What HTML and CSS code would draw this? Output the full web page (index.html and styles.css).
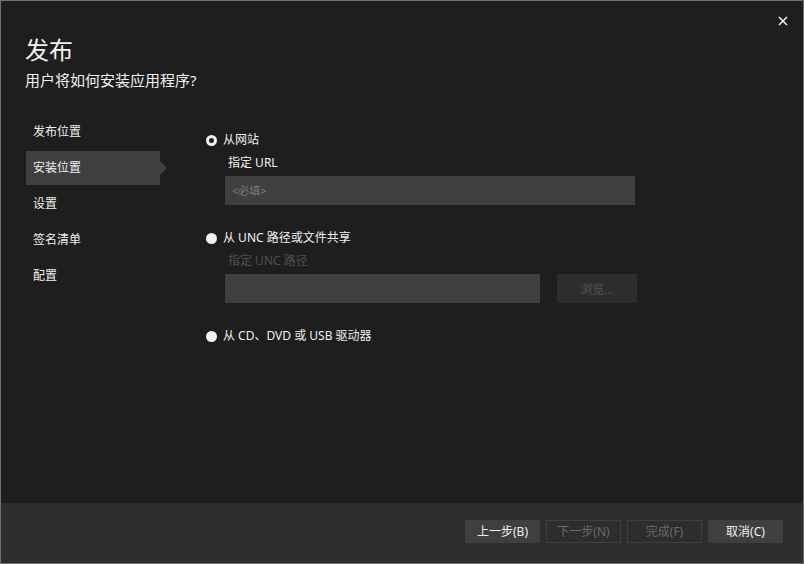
FILE: index.html
```html
<!DOCTYPE html>
<html lang="zh-CN">
  <head>
    <meta charset="UTF-8" />
    <title>发布</title>
    <link rel="stylesheet" href="styles.css">
  </head>
  <body>
    <div id="dialog">
      <button id="close" title="关闭">
        <svg width="10" height="10" viewBox="0 0 10 10">
          <path d="M1 1 L9 9 M9 1 L1 9" stroke="#f1f1f1" stroke-width="1.6" />
        </svg>
      </button>

      <div id="header">
        <h1>发布</h1>
        <div class="subtitle">用户将如何安装应用程序?</div>
      </div>

      <div id="main">
        <ul id="nav">
          <li>发布位置</li>
          <li class="active">安装位置</li>
          <li>设置</li>
          <li>签名清单</li>
          <li>配置</li>
        </ul>

        <div id="content">
          <label class="radio"><span class="dot checked"></span>从网站</label>
          <div class="field">
            <div class="caption">指定 URL</div>
            <div class="input url"><span class="placeholder">&lt;必填&gt;</span></div>
          </div>

          <label class="radio"><span class="dot"></span>从 UNC 路径或文件共享</label>
          <div class="field">
            <div class="caption off">指定 UNC 路径</div>
            <div class="row">
              <div class="input unc"></div>
              <button class="browse">浏览...</button>
            </div>
          </div>

          <label class="radio"><span class="dot"></span>从 CD、DVD 或 USB 驱动器</label>
        </div>
      </div>

      <div id="footer">
        <button class="btn">上一步(B)</button>
        <button class="btn off">下一步(N)</button>
        <button class="btn off">完成(F)</button>
        <button class="btn">取消(C)</button>
      </div>
    </div>
  </body>
</html>
```

FILE: styles.css
```css
* {
  font-family: "Segoe UI", "Noto Sans", "Noto Sans CJK SC", sans-serif;
  box-sizing: border-box;
}
body {
  margin: 0;
  background: #1e1e1e;
}
#dialog {
  position: relative;
  width: 804px;
  height: 564px;
  border: 1px solid #707070;
  background: #1e1e1e;
  color: #f1f1f1;
  display: flex;
  flex-direction: column;
}
#close {
  position: absolute;
  top: 14px;
  right: 14px;
  width: 12px;
  height: 12px;
  padding: 1px;
  border: 0;
  background: none;
  display: flex;
}

#header {
  padding: 34px 24px 0 24px;
}
h1 {
  margin: 0;
  font-size: 24px;
  font-weight: normal;
  line-height: 30px;
}
.subtitle {
  margin-top: 5px;
  font-size: 15px;
  line-height: 20px;
}

#main {
  flex: 1;
  display: flex;
  padding-top: 25px;
}
#nav {
  list-style: none;
  margin: 0 0 0 25px;
  padding: 0;
  width: 134px;
}
#nav li {
  position: relative;
  height: 34px;
  line-height: 34px;
  margin-bottom: 2px;
  padding-left: 7px;
  font-size: 12px;
}
#nav li.active {
  background: #3f3f3f;
}
#nav li.active::after {
  content: "";
  position: absolute;
  right: -7px;
  top: 10px;
  border-left: 7px solid #3f3f3f;
  border-top: 7px solid transparent;
  border-bottom: 7px solid transparent;
}

#content {
  margin-left: 46px;
  padding-top: 16px;
}
.radio {
  display: flex;
  align-items: center;
  height: 18px;
  font-size: 12px;
  line-height: 18px;
}
.dot {
  width: 11px;
  height: 11px;
  border-radius: 50%;
  background: #f1f1f1;
  margin-right: 6px;
}
.dot.checked {
  background: #1e1e1e;
  border: 3px solid #f1f1f1;
}
.field {
  padding-left: 19px;
  margin-bottom: 24px;
}
.caption {
  padding-left: 3px;
  margin-top: 3px;
  height: 22px;
  font-size: 12px;
  line-height: 22px;
}
.caption.off {
  color: #4f4f4f;
}
.input {
  height: 29px;
  background: #3f3f3f;
  margin-top: 2px;
}
.url {
  width: 410px;
  padding-left: 7px;
}
.placeholder {
  font-size: 11px;
  line-height: 29px;
  color: #7c7c7c;
}
.row {
  display: flex;
  gap: 17px;
}
.unc {
  width: 315px;
}
.browse {
  margin-top: 2px;
  width: 80px;
  height: 29px;
  border: 0;
  background: #2d2d2d;
  color: #555555;
  font-size: 12px;
}

#footer {
  height: 60px;
  flex-shrink: 0;
  background: #2d2d2d;
  display: flex;
  justify-content: flex-end;
  align-items: flex-start;
  gap: 6px;
  padding: 17px 20px 0 0;
}
.btn {
  width: 75px;
  height: 23px;
  border: 1px solid #3f3f3f;
  background: #3f3f3f;
  color: #f1f1f1;
  font-size: 12px;
  line-height: 20px;
  padding: 0;
}
.btn.off {
  background: transparent;
  color: #6a6a6a;
}
```
